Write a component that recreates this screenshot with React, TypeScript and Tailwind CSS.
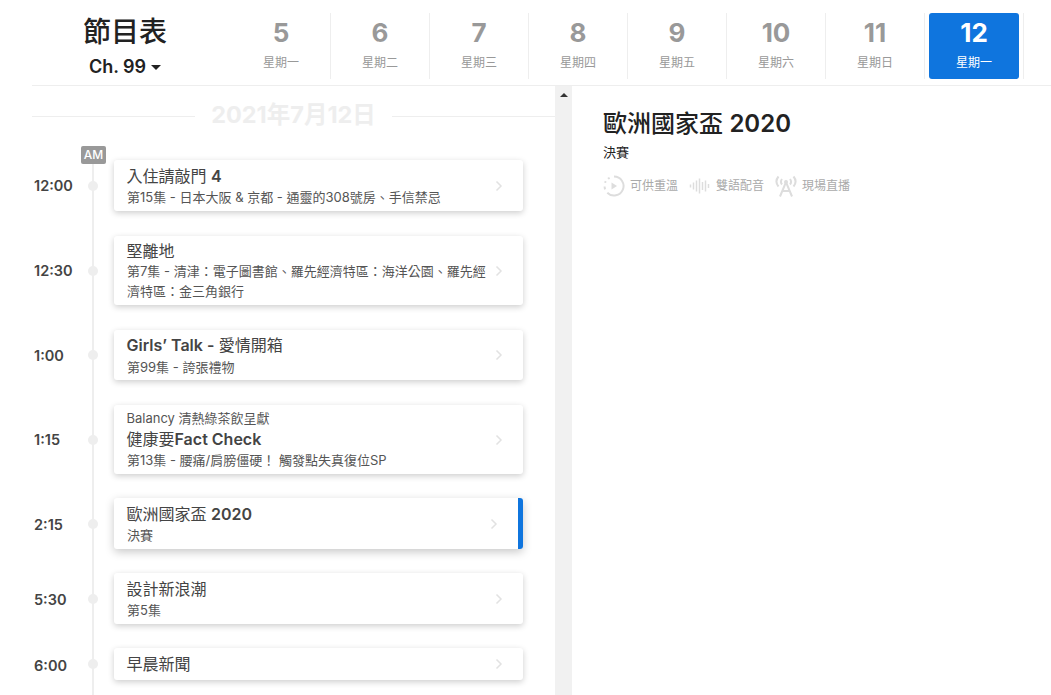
import React from "react";

const font = '[font-family:Inter,"Noto_Sans_CJK_TC",sans-serif]';

const days = [
  ["5", "星期一"],
  ["6", "星期二"],
  ["7", "星期三"],
  ["8", "星期四"],
  ["9", "星期五"],
  ["10", "星期六"],
  ["11", "星期日"],
  ["12", "星期一"],
];

type Row = {
  time: string;
  pre?: string;
  title: React.ReactNode;
  sub?: string;
  active?: boolean;
  h: string;
  lead: string;
  extra?: string;
  timePad?: string;
};

const B = ({ children }: { children: React.ReactNode }) => <span className="font-semibold">{children}</span>;

const rows: Row[] = [
  { time: "12:00", title: <>入住請敲門 <B>4</B></>, sub: "第15集 - 日本大阪 & 京都 - 通靈的308號房、手信禁忌", h: "h-[51px]", lead: "leading-[24px]", extra: "mb-[1px]" },
  { time: "12:30", title: "堅離地", sub: "第7集 - 清津：電子圖書館、羅先經濟特區：海洋公園、羅先經濟特區：金三角銀行", h: "h-[69px]", lead: "leading-[22px]", extra: "mb-[1px]" },
  { time: "1:00", title: <><B>Girls’ Talk -</B> 愛情開箱</>, sub: "第99集 - 誇張禮物", h: "h-[50px]", lead: "leading-[25px]", extra: "mb-[1px]", timePad: "pt-[2px]" },
  { time: "1:15", pre: "Balancy 清熱綠茶飲呈獻", title: <>健康要<B>Fact Check</B></>, sub: "第13集 - 腰痛/肩膀僵硬！ 觸發點失真復位SP", h: "h-[69px]", lead: "leading-[24px]" },
  { time: "2:15", title: <>歐洲國家盃 <B>2020</B></>, sub: "決賽", active: true, h: "h-[51px]", lead: "leading-[24px]", timePad: "pt-[2px]" },
  { time: "5:30", title: "設計新浪潮", sub: "第5集", h: "h-[51px]", lead: "leading-[24px]", timePad: "pt-[2px]" },
  { time: "6:00", title: "早晨新聞", h: "h-[32px]", lead: "leading-[24px]", timePad: "pt-[3px]" },
];

function Chevron({ className }: { className: string }) {
  return (
    <svg width="8" height="12" viewBox="0 0 8 12" fill="none" className={className}>
      <path d="M1.5 1.5 6 6l-4.5 4.500" stroke="#e2e2e2" strokeWidth="1.5" />
    </svg>
  );
}

function Card({ r }: { r: Row }) {
  return (
    <div className={`flex items-center ${r.extra ?? ""}`}>
      <div className={`w-[60px] pl-[2px] shrink-0 text-[14.5px] font-semibold text-[#444] ${r.timePad ?? ""}`}>{r.time}</div>
      <div className="w-[2px] shrink-0 flex justify-center">
        <span className="w-[10px] h-[10px] rounded-full bg-[#eee] shrink-0" />
      </div>
      <div
        className={`${r.h} ml-[20px] w-[409px] shrink-0 relative bg-white rounded-[3px] pl-[13px] flex flex-col justify-center overflow-hidden ${
          r.active ? "shadow-[0_3px_10px_rgba(0,0,0,0.22)]" : "shadow-[0_2px_6px_rgba(0,0,0,0.2)]"
        }`}
      >
        {r.pre && <div className="text-[13px] leading-[18px] text-[#555] -ml-[0.5px]">{r.pre}</div>}
        <div className={`text-[16px] ${r.lead} text-[#444] -ml-[0.5px]`}>{r.title}</div>
        {r.sub && <div className="text-[13px] leading-[20px] -mt-[1px] mb-[1px] text-[#555] w-[360px]">{r.sub}</div>}
        <Chevron className={`absolute top-1/2 -translate-y-1/2 ${r.active ? "right-[25px]" : "right-[20px]"}`} />
        {r.active && <span className="absolute right-0 top-0 bottom-0 w-[5px] bg-[#0f75de]" />}
      </div>
    </div>
  );
}

export default function App() {
  return (
    <div className={`${font} h-[695px] w-[1051px] overflow-hidden bg-white flex flex-col`}>
      <header className="ml-[32px] h-[86px] shrink-0 border-b border-[#eee] flex">
        <div className="w-[200px] shrink-0 flex flex-col items-center pt-[15px] pr-[14px]">
          <div className="text-[28px] leading-[34px] font-medium text-[#222]">節目表</div>
          <div className="mt-[5px] text-[18px] leading-[26px] font-semibold text-[#222] flex items-center gap-[5px]">
            Ch. 99
            <span className="w-0 h-0 border-x-[5.500px] border-x-transparent border-t-[5px] border-t-[#222]" />
          </div>
        </div>
        <div className="flex pt-[13px] h-[79px]">
          {days.map(([n, w], i) => (
            <div key={i} className="w-[99px] h-[66px] border-r border-[#eee] px-[4px]">
              <div
                className={`h-[66px] rounded-[3px] flex flex-col items-center ${
                  i === 7 ? "bg-[#0f75de] text-white" : "text-[#999]"
                }`}
              >
                <div className="text-[26px] leading-[40px] font-bold">{n}</div>
                <div className={`text-[12px] leading-[16px] mt-[2px] ${i === 7 ? "text-white" : "text-[#999]"}`}>{w}</div>
              </div>
            </div>
          ))}
        </div>
      </header>
      <main className="flex flex-1 min-h-0">
        <div className="ml-[32px] w-[523px] shrink-0 overflow-hidden relative">
          <div className="flex items-center h-[60px]">
            <div className="w-[163px] h-px bg-[#eee]" />
            <div className="w-[197px] text-center text-[23.5px] leading-[30px] -mt-[2px] font-bold text-[#eee] whitespace-nowrap">2021年7月12日</div>
            <div className="flex-1 h-px bg-[#eee]" />
          </div>
          <div className="absolute left-[60px] top-[70px] bottom-0 w-[2px] bg-[#eee]" />
          <div className="absolute left-[49px] top-[60px] h-[18px] w-[25px] rounded-[2px] bg-[#999] text-white text-[12px] leading-[18px] text-center font-medium">
            AM
          </div>
          <div className="relative flex flex-col gap-[24px] pt-[14px]">
            {rows.map((r, i) => (
              <Card key={i} r={r} />
            ))}
          </div>
        </div>
        <div className="w-[17px] shrink-0 bg-[#f1f1f1] relative flex justify-center pt-[7px]">
          <span className="w-0 h-0 border-x-[4px] border-x-transparent border-b-[4px] border-b-[#333]" />
        </div>
        <div className="flex-1 pl-[32px] pt-[21px]">
          <h1 className="-ml-[1px] text-[24px] leading-[34px] font-medium text-[#222]">歐洲國家盃 <span className="font-semibold">2020</span></h1>
          <p className="-ml-[1px] text-[13px] leading-[18px] mt-[2px] text-[#222]">決賽</p>
          <div className="mt-[14px] -ml-[1px] flex items-center text-[12px] text-[#aaa]">
            <svg width="22" height="22" viewBox="0 0 22 22" fill="none" stroke="#ddd" strokeWidth="2">
              <path d="M11 1.500a9.500 9.500 0 1 1-6.700 16.200" />
              <path d="M1.600 11.500c0 1 .2 2 .5 2.800M2 7.800c.2-.6.5-1.100.8-1.600M5 3.800c.5-.4 1-.7 1.600-1" />
              <path d="M8.500 7.500v7l5.500-3.500z" fill="#ddd" stroke="none" />
            </svg>
            <span className="ml-[5px]">可供重溫</span>
            <svg width="22" height="18" viewBox="0 0 22 18" fill="none" stroke="#ddd" strokeWidth="1.500" className="ml-[11px]">
              <path d="M1.500 7.500v3M4.500 5.500v7M7.500 3.500v11M10.500 1.500v15M13.500 5v8M16.500 3.500v11M19.500 7v4" />
            </svg>
            <span className="ml-[5px]">雙語配音</span>
            <svg width="22" height="22" viewBox="0 0 22 22" fill="none" stroke="#ddd" strokeWidth="2" className="ml-[11px]">
              <path d="M5 21.500 11 7l6 14.500M7.500 16h7" />
              <circle cx="11" cy="7" r="2" fill="#ddd" stroke="none" />
              <path d="M7 9.500c-1.300-1.600-1.300-3.800 0-5.500M15 9.500c1.300-1.600 1.300-3.800 0-5.500M3.500 11.500C1 8.500 1 4.500 3.500 1.500M18.500 11.500c2.500-3 2.500-7 0-10" />
            </svg>
            <span className="ml-[5px]">現場直播</span>
          </div>
        </div>
      </main>
    </div>
  );
}
